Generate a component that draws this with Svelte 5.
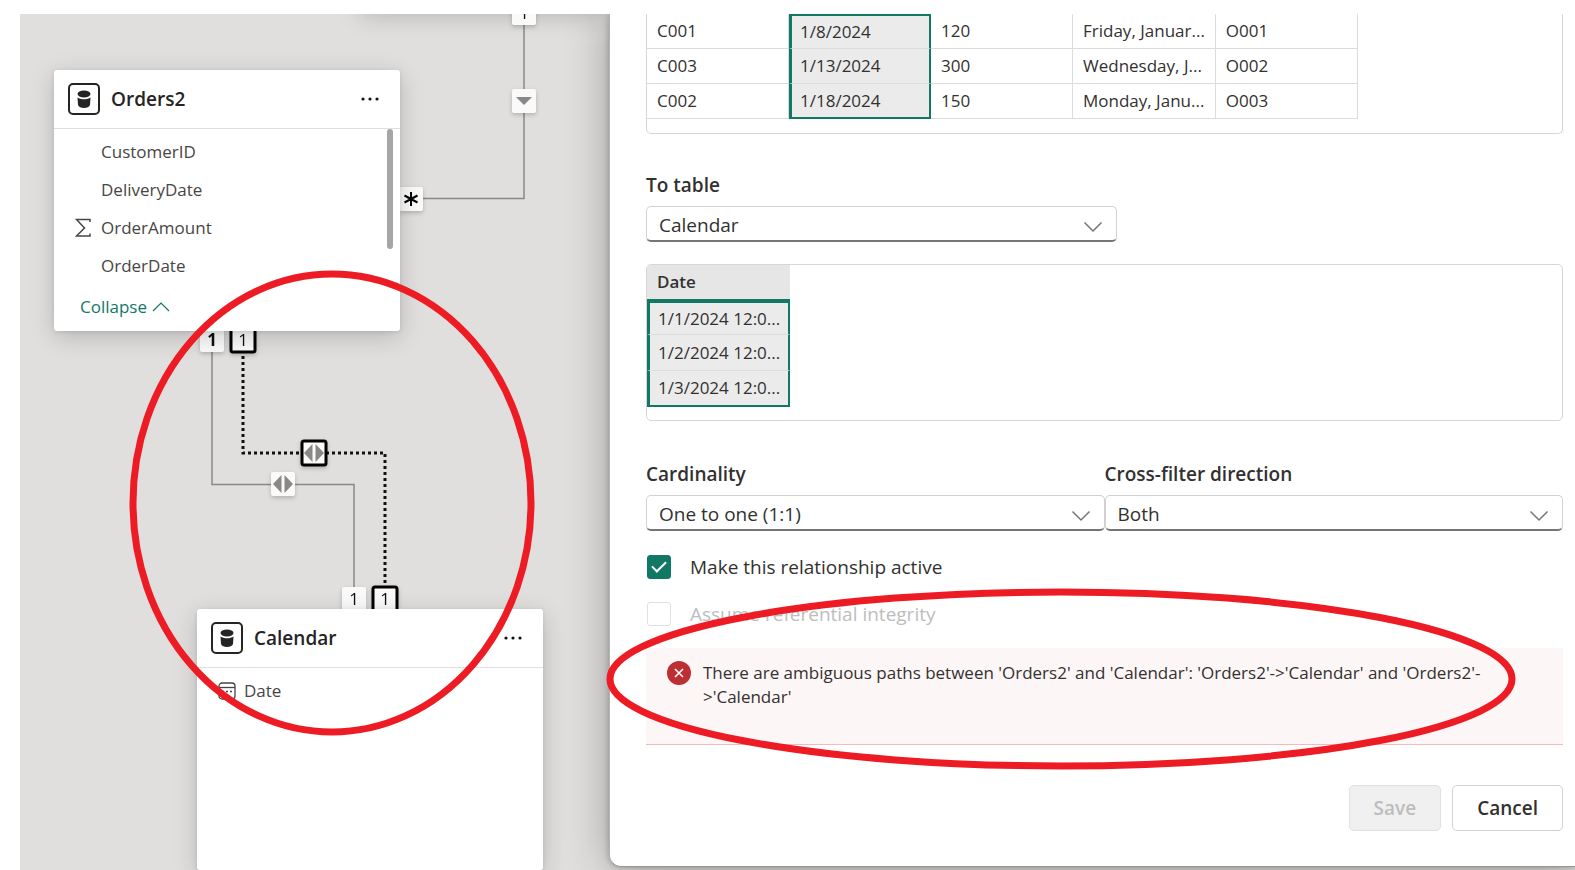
<script>
  const orders = [
    { customer: "C001", date: "1/8/2024", amount: 120, delivery: "Friday, Januar...", id: "O001" },
    { customer: "C003", date: "1/13/2024", amount: 300, delivery: "Wednesday, J...", id: "O002" },
    { customer: "C002", date: "1/18/2024", amount: 150, delivery: "Monday, Janu...", id: "O003" },
  ];
  const dates = ["1/1/2024 12:0...", "1/2/2024 12:0...", "1/3/2024 12:0..."];
  const fields = [
    { name: "CustomerID" },
    { name: "DeliveryDate" },
    { name: "OrderAmount", sum: true },
    { name: "OrderDate" },
  ];

  // relationship ends and direction markers on the canvas
  const markers = [
    { x: 492, y: -13, kind: "one" },
    { x: 492, y: 75, kind: "down" },
    { x: 379, y: 173, kind: "many" },
    { x: 180, y: 314, kind: "one", bold: true },
    { x: 211, y: 314, kind: "one", selected: true },
    { x: 282, y: 427, kind: "both", selected: true },
    { x: 251, y: 458, kind: "both" },
    { x: 322, y: 573, kind: "one" },
    { x: 353, y: 573, kind: "one", selected: true },
  ];

  let active = true;
</script>

{#snippet tableIcon()}
  <svg class="table-icon" viewBox="0 0 32 32" aria-hidden="true">
    <rect x="1" y="1" width="30" height="30" rx="4" fill="#fff" stroke="#252423" stroke-width="2" />
    <ellipse cx="16" cy="11" rx="6.500" ry="3.400" fill="#252423" />
    <path d="M9.500 14.500c3 2.400 10 2.400 13 0l-.5 7.500c-1 4-11 4-12 0z" fill="#252423" />
  </svg>
{/snippet}

{#snippet dots()}
  <button class="more" aria-label="More options">
    <svg width="20" height="6" viewBox="0 0 20 6">
      <circle cx="3" cy="3" r="1.600" />
      <circle cx="10" cy="3" r="1.600" />
      <circle cx="17" cy="3" r="1.600" />
    </svg>
  </button>
{/snippet}

{#snippet chevron()}
  <svg class="chevron" width="20" height="12" viewBox="0 0 20 12" aria-hidden="true">
    <path d="M1.500 1.500l8.500 8.500 8.500-8.500" fill="none" stroke="#757575" stroke-width="1.500" />
  </svg>
{/snippet}

<div class="page">
  <div class="workspace">
    <section class="canvas" aria-label="Model view">
      <div class="node above"></div>

      <svg class="links" width="589" height="856" viewBox="0 0 589 856" aria-hidden="true">
        <path d="M504 0V184.500H400" class="link" />
        <path d="M192 330V470.500H334V580" class="link" />
        <path d="M223 330V439H365V580" class="link dotted" />
        {#each markers as m}
          <g transform="translate({m.x} {m.y})" class="marker" class:selected={m.selected}>
            <rect x="0" y="0" width="24" height="24" rx="2" />
            {#if m.kind === "one"}
              <text x="12" y="18" class:bold={m.bold}>1</text>
            {:else if m.kind === "many"}
              <path d="M12 5v14M5.500 8.500l13 7M18.500 8.500l-13 7" class="star" />
            {:else if m.kind === "down"}
              <path d="M4 8h16l-8 8z" class="arrow" />
            {:else}
              <path d="M10.500 3v18L2 12zM13.500 3v18L22 12z" class="arrow" />
            {/if}
          </g>
        {/each}
      </svg>

      <article class="node orders">
        <header>
          {@render tableIcon()}
          <h2>Orders2</h2>
          {@render dots()}
        </header>
        <ul>
          {#each fields as field}
            <li>
              <span class="glyph">
                {#if field.sum}
                  <svg width="16" height="20" viewBox="0 0 16 20" aria-hidden="true">
                    <path d="M15 4V1.500H1.500L9.500 10l-8 8H15v-2.500" fill="none" stroke="#484644" stroke-width="1.500" />
                  </svg>
                {/if}
              </span>
              {field.name}
            </li>
          {/each}
        </ul>
        <button class="collapse">
          Collapse
          <svg width="18" height="10" viewBox="0 0 18 10" aria-hidden="true">
            <path d="M1 9l8-8 8 8" fill="none" stroke="currentColor" stroke-width="1.200" />
          </svg>
        </button>
        <div class="thumb"></div>
      </article>

      <article class="node calendar">
        <header>
          {@render tableIcon()}
          <h2>Calendar</h2>
          {@render dots()}
        </header>
        <ul>
          <li>
            <svg width="18" height="18" viewBox="0 0 18 18" aria-hidden="true">
              <rect x="1" y="1" width="16" height="16" rx="3" fill="none" stroke="#484644" stroke-width="1.300" />
              <path d="M1 5.500h16" stroke="#484644" stroke-width="1.300" />
              <path d="M4 9.500h2M8 9.500h2M12 9.500h2M4 13h2M8 13h2" stroke="#484644" stroke-width="1.600" />
            </svg>
            Date
          </li>
        </ul>
      </article>
    </section>

    <form class="panel" on:submit|preventDefault>
      <div class="grid-box from">
        <table>
          <tbody>
            {#each orders as row}
              <tr>
                <td>{row.customer}</td>
                <td class="picked">{row.date}</td>
                <td>{row.amount}</td>
                <td>{row.delivery}</td>
                <td>{row.id}</td>
              </tr>
            {/each}
          </tbody>
        </table>
      </div>

      <div class="field to-table">
        <label for="to">To table</label>
        <div class="select">
          <select id="to"><option>Calendar</option></select>
          {@render chevron()}
        </div>
      </div>

      <div class="grid-box to">
        <table>
          <thead>
            <tr><th>Date</th></tr>
          </thead>
          <tbody>
            {#each dates as date}
              <tr><td class="picked">{date}</td></tr>
            {/each}
          </tbody>
        </table>
      </div>

      <div class="pair">
        <div class="field">
          <label for="cardinality">Cardinality</label>
          <div class="select">
            <select id="cardinality"><option>One to one (1:1)</option></select>
            {@render chevron()}
          </div>
        </div>
        <div class="field">
          <label for="direction">Cross-filter direction</label>
          <div class="select">
            <select id="direction"><option>Both</option></select>
            {@render chevron()}
          </div>
        </div>
      </div>

      <div class="checks">
        <label class="check">
          <input type="checkbox" bind:checked={active} />
          Make this relationship active
        </label>
        <label class="check disabled">
          <input type="checkbox" disabled />
          Assume referential integrity
        </label>
      </div>

      <div class="error" role="alert">
        <svg width="24" height="24" viewBox="0 0 24 24" aria-hidden="true">
          <circle cx="12" cy="12" r="12" fill="#bc2f32" />
          <path d="M8 8l8 8M16 8l-8 8" stroke="#fff" stroke-width="1.600" />
        </svg>
        <p>There are ambiguous paths between 'Orders2' and 'Calendar': 'Orders2'->'Calendar' and 'Orders2'-<wbr />>'Calendar'</p>
      </div>

      <div class="actions">
        <button disabled>Save</button>
        <button>Cancel</button>
      </div>
    </form>
  </div>

  <svg class="ink" width="1575" height="870" viewBox="0 0 1575 870" aria-hidden="true">
    <ellipse cx="332" cy="503" rx="199" ry="229" />
    <ellipse cx="1061" cy="679" rx="451" ry="87" />
  </svg>
</div>

<style>
  :global(body) {
    background: #fff;
  }
  * {
    box-sizing: border-box;
  }
  .page {
    position: relative;
    min-height: 100vh;
    padding: 14px 0 0 20px;
    overflow: hidden;
    font-family: "Open Sans", "Noto Sans", sans-serif;
    font-size: 17px;
    line-height: 24px;
    color: #323130;
  }
  button,
  select {
    font: inherit;
    color: inherit;
  }
  .workspace {
    display: flex;
    align-items: flex-start;
    min-height: calc(100vh - 14px);
    background: #e0dfdd;
    overflow: hidden;
  }

  .canvas {
    position: relative;
    flex: 0 0 589px;
    align-self: stretch;
  }
  .links {
    position: absolute;
    left: 0;
    top: 0;
  }
  .link {
    fill: none;
    stroke: #8a8886;
    stroke-width: 1.5;
  }
  .dotted {
    stroke: #111;
    stroke-width: 3;
    stroke-dasharray: 3 3;
  }
  .marker {
    filter: drop-shadow(0 2px 2px rgba(0, 0, 0, 0.2));
  }
  .marker rect {
    fill: #fafafa;
  }
  .marker.selected rect {
    stroke: #000;
    stroke-width: 3;
  }
  .marker text {
    font-size: 17px;
    text-anchor: middle;
    fill: #111;
  }
  .marker .bold {
    font-weight: 700;
  }
  .star {
    stroke: #000;
    stroke-width: 2;
  }
  .arrow {
    fill: #8a8886;
  }

  .node {
    position: absolute;
    width: 346px;
    background: #fff;
    border-radius: 3px;
    box-shadow: 0 6px 24px rgba(0, 0, 0, 0.18), 0 1px 4px rgba(0, 0, 0, 0.1);
  }
  .above {
    left: 340px;
    top: -40px;
    width: 250px;
    height: 36px;
  }
  .orders {
    left: 34px;
    top: 56px;
    height: 261px;
  }
  .calendar {
    left: 177px;
    top: 595px;
    bottom: 0;
  }
  .node header {
    display: flex;
    align-items: center;
    gap: 11px;
    height: 59px;
    padding: 0 16px 0 14px;
    border-bottom: 1px solid #e1dfdd;
  }
  .table-icon {
    width: 32px;
    height: 32px;
  }
  h2 {
    flex: 1;
    margin: 0;
    font-size: 19px;
    font-weight: 600;
    color: #252423;
  }
  .more {
    display: flex;
    padding: 4px;
    border: 0;
    background: none;
    fill: #111;
  }
  .node ul {
    margin: 0;
    padding: 4px 0 0 21px;
    list-style: none;
  }
  .node li {
    display: flex;
    align-items: center;
    gap: 8px;
    height: 38px;
    color: #484644;
  }
  .glyph {
    display: flex;
    width: 18px;
  }
  .collapse {
    display: flex;
    align-items: center;
    gap: 5px;
    height: 44px;
    padding: 0 26px;
    border: 0;
    background: none;
    color: #117865;
  }
  .thumb {
    position: absolute;
    top: 59px;
    right: 7px;
    width: 6px;
    height: 120px;
    border-radius: 3px;
    background: #a6a6a6;
  }

  .panel {
    position: relative;
    flex: 1;
    min-width: 0;
    padding: 0 12px 35px 36px;
    background: #fff;
    border-left: 1px solid #b3b0ad;
    border-bottom: 1px solid #979593;
    border-bottom-left-radius: 12px;
    box-shadow: 0 0 44px rgba(0, 0, 0, 0.3), 0 0 6px rgba(0, 0, 0, 0.25);
  }
  .grid-box {
    border: 1px solid #d6d6d6;
    border-radius: 5px;
    overflow: hidden;
  }
  .from {
    padding-bottom: 14px;
    border-top: 0;
    border-top-left-radius: 0;
    border-top-right-radius: 0;
  }
  .to {
    padding-bottom: 13px;
  }
  table {
    table-layout: fixed;
    border-collapse: separate;
    border-spacing: 0;
  }
  td,
  th {
    width: 142px;
    height: 35px;
    padding: 0 10px;
    text-align: left;
    white-space: nowrap;
    border-right: 1px solid #dcdcdc;
    border-bottom: 1px solid #dcdcdc;
  }
  .to td {
    height: 36px;
  }
  th {
    height: 34px;
    font-weight: 600;
    background: #e6e6e6;
    border: 0;
  }
  td.picked {
    padding: 0 8px;
    background: #ebebeb;
    border-left: 3px solid #117865;
    border-right: 2px solid #117865;
  }
  tr:first-child .picked {
    border-top: 2px solid #117865;
  }
  tr:last-child .picked {
    border-bottom: 2px solid #117865;
  }
  .to tr:first-child .picked {
    border-top-width: 4px;
  }

  .field label {
    display: block;
    font-size: 19px;
    font-weight: 600;
  }
  .to-table {
    width: 471px;
    margin: 39px 0 22px;
  }
  .select {
    position: relative;
    margin-top: 9px;
  }
  select {
    display: block;
    width: 100%;
    height: 36px;
    padding: 2px 12px 0;
    font-size: 19px;
    appearance: none;
    background: #fff;
    border: 1px solid #d1d1d1;
    border-bottom: 2px solid #757575;
    border-radius: 5px;
  }
  .chevron {
    position: absolute;
    right: 14px;
    top: 15px;
    pointer-events: none;
  }
  .pair {
    display: grid;
    grid-template-columns: 1fr 1fr;
    margin-top: 41px;
  }

  .checks {
    display: flex;
    flex-direction: column;
    gap: 23px;
    margin-top: 24px;
  }
  .check {
    display: flex;
    align-items: center;
    gap: 19px;
    font-size: 19px;
  }
  .check input {
    appearance: none;
    display: grid;
    place-items: center;
    width: 24px;
    height: 24px;
    margin: 0 0 0 1px;
    background: #fff;
    border: 1px solid #616161;
    border-radius: 3px;
  }
  .check input:checked {
    background: #117865;
    border-color: #117865;
  }
  .check input:checked::before {
    content: "";
    width: 12px;
    height: 6px;
    border-left: 2px solid #fff;
    border-bottom: 2px solid #fff;
    transform: translateY(-2px) rotate(-45deg);
  }
  .disabled {
    color: #bdbdbd;
  }
  .check input:disabled {
    border-color: #e0e0e0;
  }

  .error {
    display: flex;
    align-items: flex-start;
    gap: 12px;
    height: 97px;
    margin-top: 22px;
    padding: 13px 64px 0 21px;
    background: #fdf6f6;
    border-bottom: 1px solid #f1bbbc;
  }
  .error svg {
    flex: none;
  }
  .error p {
    margin: 0;
  }
  .actions {
    display: flex;
    justify-content: flex-end;
    gap: 11px;
    margin-top: 40px;
  }
  .actions button {
    height: 46px;
    padding: 0 24px;
    font-size: 19px;
    font-weight: 600;
    background: #fff;
    border: 1px solid #d1d1d1;
    border-radius: 5px;
  }
  .actions button:disabled {
    color: #bdbdbd;
    background: #f0f0f0;
    border-color: #e0e0e0;
  }

  /* hand drawn highlight rings */
  .ink {
    position: absolute;
    left: 0;
    top: 0;
    pointer-events: none;
  }
  .ink ellipse {
    fill: none;
    stroke: #ed1c24;
    stroke-width: 7;
  }
</style>
